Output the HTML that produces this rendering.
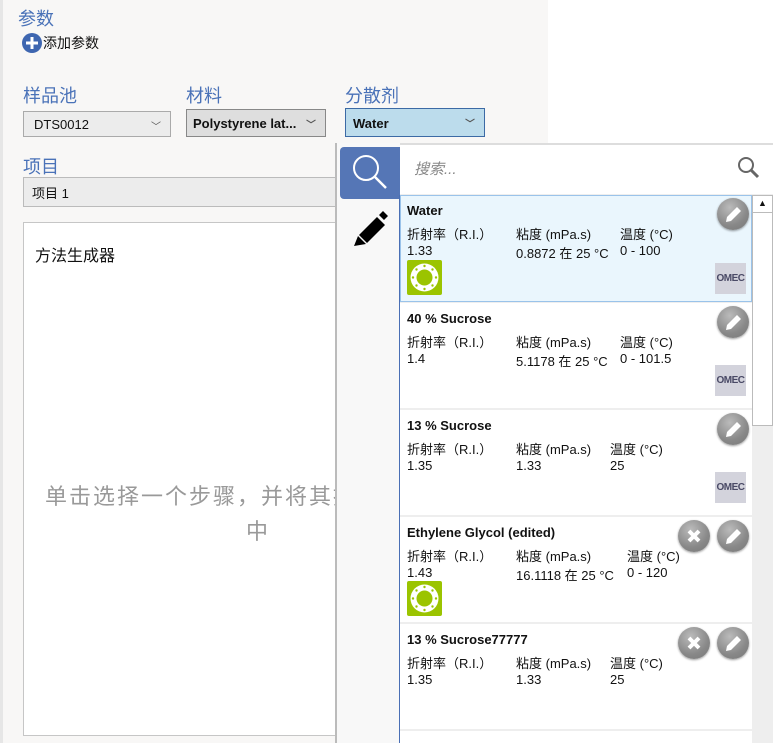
<!DOCTYPE html>
<html><head><meta charset="utf-8"><style>
*{margin:0;padding:0;box-sizing:border-box}
html,body{width:773px;height:743px;overflow:hidden}
body{position:relative;background:#fff;font-family:"Liberation Sans","Noto Sans CJK SC",sans-serif;color:#111}
.a{position:absolute;white-space:nowrap}
.h{color:#4a72b8;font-size:18px}
.sel{position:absolute;height:26px;border:1px solid #aaa;font-size:13px;padding:5px 0 0 10px}
.chev{position:absolute;right:9px;top:6px;font-size:10px;color:#555}
.item{position:absolute;left:400px;width:352px;height:105px;background:#fff;font-size:13px}
.item .t{position:absolute;left:7px;top:8px;font-weight:bold}
.item .r1{position:absolute;top:29px}
.item .r2{position:absolute;top:48px}
.btn{position:absolute;width:32px;height:32px;border-radius:50%;background:radial-gradient(circle at 40% 30%,#bbb,#888 60%,#777);box-shadow:0 1px 2px rgba(0,0,0,.4)}
.omec{position:absolute;left:315px;top:62px;width:31px;height:31px;background:#d3d3dc;color:#4a4a66;font-size:10px;font-weight:bold;padding-top:10px;text-align:center;letter-spacing:-0.5px}
</style></head><body>
<div class="a" style="left:0;top:0;width:548px;height:743px;background:#f8f7f6"></div>
<div class="a" style="left:0;top:0;width:3px;height:743px;background:#e6e6e6"></div>
<div class="a h" style="left:18px;top:5px">参数</div>
<svg class="a" style="left:22px;top:33px" width="20" height="20"><circle cx="10" cy="10" r="10" fill="#3e66b0"/><path d="M10 4v12M4 10h12" stroke="#fff" stroke-width="3"/></svg>
<div class="a" style="left:43px;top:33px;font-size:14px">添加参数</div>
<div class="a h" style="left:23px;top:82px">样品池</div>
<div class="a h" style="left:186px;top:82px">材料</div>
<div class="a h" style="left:345px;top:82px">分散剂</div>
<div class="sel" style="left:23px;top:111px;width:148px;background:#ececec">DTS0012<span class="chev">﹀</span></div>
<div class="sel" style="left:186px;top:109px;width:140px;background:#dedede;border-color:#888;font-weight:bold;height:28px;padding-left:6px;padding-top:6px">Polystyrene lat...<span class="chev">﹀</span></div>
<div class="sel" style="left:345px;top:108px;width:140px;background:#bcdcec;border-color:#3c6aa5;font-weight:bold;height:29px;padding-left:7px;padding-top:7px">Water<span class="chev">﹀</span></div>
<div class="a h" style="left:23px;top:153px">项目</div>
<div class="a" style="left:23px;top:177px;width:330px;height:30px;background:#ececec;border:1px solid #bbb;font-size:13px;padding:5px 0 0 8px">项目 1</div>
<div class="a" style="left:23px;top:222px;width:330px;height:514px;background:#fff;border:1px solid #c6c6c6"></div>
<div class="a" style="left:35px;top:242px;font-size:16px">方法生成器</div>
<div class="a" style="left:45px;top:479px;font-size:22px;color:#999;letter-spacing:2px;width:290px;overflow:hidden">单击选择一个步骤，并将其拖放到</div>
<div class="a" style="left:246px;top:514px;font-size:22px;color:#999">中</div>

<div class="a" style="left:335px;top:143px;width:438px;height:600px;background:#f8f8f8;border-left:2px solid #bbb"></div>
<div class="a" style="left:340px;top:147px;width:60px;height:52px;background:#5576b6;border-radius:4px 0 0 4px"></div>
<svg class="a" style="left:340px;top:147px" width="60" height="52"><circle cx="26" cy="21" r="12" stroke="#fff" stroke-width="2" fill="none"/><path d="M35 30l11 11" stroke="#fff" stroke-width="2.5"/></svg>
<svg class="a" style="left:350px;top:209px" width="38" height="38"><path d="M4 37l4-10 8 8z M9 26L27 8l8 8-18 18z M29 6l4-4 5 5-4 4z" fill="#000"/></svg>
<div class="a" style="left:399px;top:195px;width:2px;height:548px;background:#4a6fb5"></div>
<div class="a" style="left:400px;top:143px;width:373px;height:51px;background:#fff;border-top:2px solid #ddd"></div>
<div class="a" style="left:414px;top:158px;font-size:15px;font-style:italic;color:#888">搜索...</div>
<svg class="a" style="left:737px;top:156px" width="24" height="24"><circle cx="9" cy="9" r="7" stroke="#666" stroke-width="2" fill="none"/><path d="M14 14l7 7" stroke="#666" stroke-width="3"/></svg>
<div class="a" style="left:400px;top:194px;width:373px;height:549px;background:#eeeeee"></div>
<div class="a" style="left:752px;top:195px;width:21px;height:231px;background:#fff;border:1px solid #bbb"></div>
<div class="a" style="left:752px;top:195px;width:21px;height:18px;border:1px solid #bbb;background:#fff;font-size:9px;text-align:center;padding-top:2px">▲</div>

<div class="item" style="top:195px;height:107px;background:#eaf6fd;border:1px solid #9ac3ea">
<div class="t" style="left:6px;top:7px">Water</div>
<div class="r1" style="left:6px;top:28px">折射率（R.I.）</div><div class="r1" style="left:115px;top:28px">粘度 (mPa.s)</div><div class="r1" style="left:219px;top:28px">温度 (°C)</div>
<div class="r2" style="left:6px;top:47px">1.33</div><div class="r2" style="left:115px;top:47px">0.8872 在 25 °C</div><div class="r2" style="left:219px;top:47px">0 - 100</div>
</div>
<div class="item" style="top:303px">
<div class="t">40 % Sucrose</div>
<div class="r1" style="left:7px">折射率（R.I.）</div><div class="r1" style="left:116px">粘度 (mPa.s)</div><div class="r1" style="left:220px">温度 (°C)</div>
<div class="r2" style="left:7px">1.4</div><div class="r2" style="left:116px">5.1178 在 25 °C</div><div class="r2" style="left:220px">0 - 101.5</div>
<div class="omec">OMEC</div></div>
<div class="item" style="top:410px">
<div class="t">13 % Sucrose</div>
<div class="r1" style="left:7px">折射率（R.I.）</div><div class="r1" style="left:116px">粘度 (mPa.s)</div><div class="r1" style="left:210px">温度 (°C)</div>
<div class="r2" style="left:7px">1.35</div><div class="r2" style="left:116px">1.33</div><div class="r2" style="left:210px">25</div>
<div class="omec">OMEC</div></div>
<div class="item" style="top:517px">
<div class="t">Ethylene Glycol (edited)</div>
<div class="r1" style="left:7px">折射率（R.I.）</div><div class="r1" style="left:116px">粘度 (mPa.s)</div><div class="r1" style="left:227px">温度 (°C)</div>
<div class="r2" style="left:7px">1.43</div><div class="r2" style="left:116px">16.1118 在 25 °C</div><div class="r2" style="left:227px">0 - 120</div>
</div>
<div class="item" style="top:624px">
<div class="t">13 % Sucrose77777</div>
<div class="r1" style="left:7px">折射率（R.I.）</div><div class="r1" style="left:116px">粘度 (mPa.s)</div><div class="r1" style="left:210px">温度 (°C)</div>
<div class="r2" style="left:7px">1.35</div><div class="r2" style="left:116px">1.33</div><div class="r2" style="left:210px">25</div>
</div>
<div class="item" style="top:731px;height:12px"></div>
<div class="a" style="left:715px;top:263px;width:31px;height:31px;background:#d3d3dc;color:#4a4a66;font-size:10px;font-weight:bold;padding-top:10px;text-align:center;letter-spacing:-0.5px">OMEC</div>

<svg class="a" style="left:407px;top:260px" width="35" height="35"><rect width="35" height="35" rx="2" fill="#9bc400"/><circle cx="17.5" cy="17.5" r="14" fill="#fff"/><circle cx="17.5" cy="17.5" r="8" fill="#9bc400"/><g fill="#9bc400"><circle cx="17.5" cy="6" r="1.2"/><circle cx="17.5" cy="29" r="1.2"/><circle cx="6" cy="17.5" r="1.2"/><circle cx="29" cy="17.5" r="1.2"/><circle cx="9.5" cy="9.5" r="1.2"/><circle cx="25.5" cy="9.5" r="1.2"/><circle cx="9.5" cy="25.5" r="1.2"/><circle cx="25.5" cy="25.5" r="1.2"/></g></svg>
<svg class="a" style="left:407px;top:581px" width="35" height="35"><rect width="35" height="35" rx="2" fill="#9bc400"/><circle cx="17.5" cy="17.5" r="14" fill="#fff"/><circle cx="17.5" cy="17.5" r="8" fill="#9bc400"/><g fill="#9bc400"><circle cx="17.5" cy="6" r="1.2"/><circle cx="17.5" cy="29" r="1.2"/><circle cx="6" cy="17.5" r="1.2"/><circle cx="29" cy="17.5" r="1.2"/><circle cx="9.5" cy="9.5" r="1.2"/><circle cx="25.5" cy="9.5" r="1.2"/><circle cx="9.5" cy="25.5" r="1.2"/><circle cx="25.5" cy="25.5" r="1.2"/></g></svg>

<div class="btn" style="left:717px;top:198px"></div>
<div class="btn" style="left:717px;top:306px"></div>
<div class="btn" style="left:717px;top:413px"></div>
<div class="btn" style="left:717px;top:520px"></div>
<div class="btn" style="left:717px;top:627px"></div>
<div class="btn" style="left:678px;top:520px"></div>
<div class="btn" style="left:678px;top:627px"></div>
<svg class="a" style="left:717px;top:198px" width="32" height="32"><path d="M9 24l1-5 10-10 4 4-10 10z" fill="#fff"/></svg>
<svg class="a" style="left:717px;top:306px" width="32" height="32"><path d="M9 24l1-5 10-10 4 4-10 10z" fill="#fff"/></svg>
<svg class="a" style="left:717px;top:413px" width="32" height="32"><path d="M9 24l1-5 10-10 4 4-10 10z" fill="#fff"/></svg>
<svg class="a" style="left:717px;top:520px" width="32" height="32"><path d="M9 24l1-5 10-10 4 4-10 10z" fill="#fff"/></svg>
<svg class="a" style="left:717px;top:627px" width="32" height="32"><path d="M9 24l1-5 10-10 4 4-10 10z" fill="#fff"/></svg>
<svg class="a" style="left:678px;top:520px" width="32" height="32"><path d="M11 11l10 10M21 11l-10 10" stroke="#fff" stroke-width="4"/></svg>
<svg class="a" style="left:678px;top:627px" width="32" height="32"><path d="M11 11l10 10M21 11l-10 10" stroke="#fff" stroke-width="4"/></svg>
</body></html>
